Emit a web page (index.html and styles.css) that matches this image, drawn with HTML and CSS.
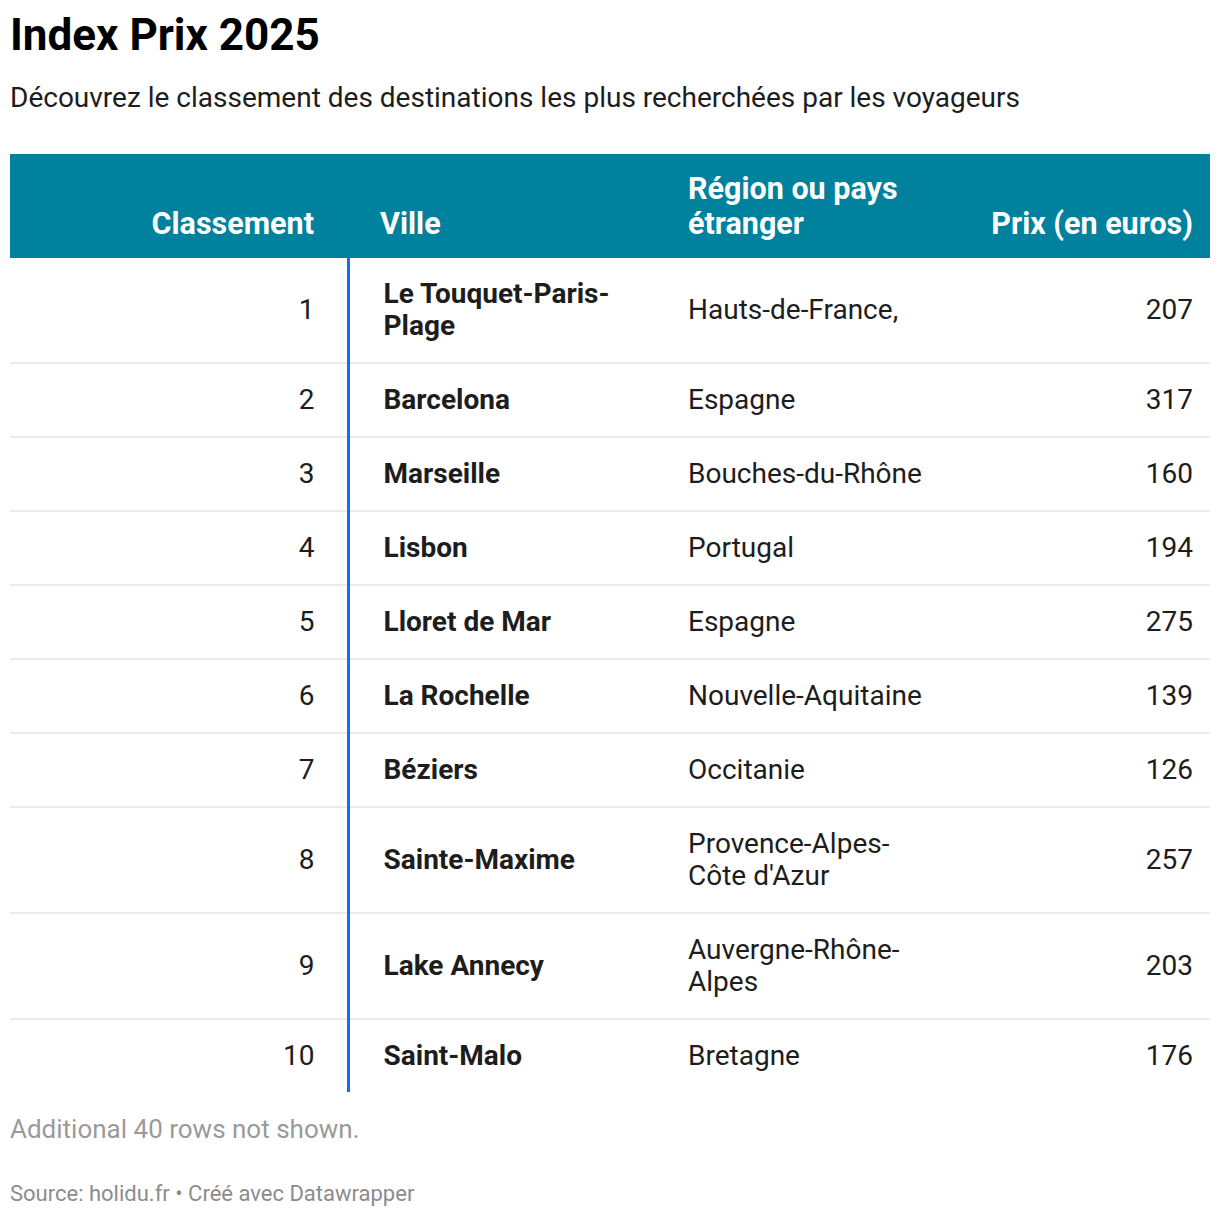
FILE: index.html
```html
<!DOCTYPE html>
<html lang="fr">
<head>
<meta charset="utf-8">
<title>Index Prix 2025</title>
<link rel="stylesheet" href="styles.css">
</head>
<body>
<div class="chart">
  <h1 class="title">Index Prix 2025</h1>
  <p class="subtitle">Découvrez le classement des destinations les plus recherchées par les voyageurs</p>
  <table class="table">
    <colgroup>
      <col class="c-rank">
      <col class="c-city">
      <col class="c-region">
      <col class="c-price">
    </colgroup>
    <thead>
      <tr>
        <th class="rank">Classement</th>
        <th class="city">Ville</th>
        <th class="region">Région ou pays étranger</th>
        <th class="price">Prix (en euros)</th>
      </tr>
    </thead>
    <tbody>
      <tr><td class="rank">1</td><td class="city">Le Touquet-Paris-Plage</td><td class="region">Hauts-de-France,</td><td class="price">207</td></tr>
      <tr><td class="rank">2</td><td class="city">Barcelona</td><td class="region">Espagne</td><td class="price">317</td></tr>
      <tr><td class="rank">3</td><td class="city">Marseille</td><td class="region">Bouches-du-Rhône</td><td class="price">160</td></tr>
      <tr><td class="rank">4</td><td class="city">Lisbon</td><td class="region">Portugal</td><td class="price">194</td></tr>
      <tr><td class="rank">5</td><td class="city">Lloret de Mar</td><td class="region">Espagne</td><td class="price">275</td></tr>
      <tr><td class="rank">6</td><td class="city">La Rochelle</td><td class="region">Nouvelle-Aquitaine</td><td class="price">139</td></tr>
      <tr><td class="rank">7</td><td class="city">Béziers</td><td class="region">Occitanie</td><td class="price">126</td></tr>
      <tr><td class="rank">8</td><td class="city">Sainte-Maxime</td><td class="region">Provence-Alpes-Côte d'Azur</td><td class="price">257</td></tr>
      <tr><td class="rank">9</td><td class="city">Lake Annecy</td><td class="region">Auvergne-Rhône-Alpes</td><td class="price">203</td></tr>
      <tr><td class="rank">10</td><td class="city">Saint-Malo</td><td class="region">Bretagne</td><td class="price">176</td></tr>
    </tbody>
  </table>
  <p class="note">Additional 40 rows not shown.</p>
  <p class="source">Source: holidu.fr • Créé avec Datawrapper</p>
</div>
</body>
</html>
```

FILE: styles.css
```css
html, body {
  margin: 0;
  padding: 0;
  background: #ffffff;
}

body {
  font-family: Roboto, "Liberation Sans", sans-serif;
  color: #1d1d1d;
}

.chart {
  padding: 8px 10px 0 10px;
}

.title {
  margin: 0;
  font-size: 44px;
  font-weight: 700;
  line-height: 54px;
  color: #000000;
}

.subtitle {
  margin: 19px 0 0 0;
  font-size: 28px;
  line-height: 34px;
  color: #1d1d1d;
}

.table {
  margin-top: 39px;
  width: 1200px;
  border-collapse: collapse;
  table-layout: fixed;
}

.c-rank { width: 338px; }
.c-city { width: 308px; }
.c-region { width: 304px; }
.c-price { width: 250px; }

.table th {
  background: #00819d;
  color: #ffffff;
  font-size: 30.5px;
  font-weight: 700;
  line-height: 35px;
  vertical-align: bottom;
  text-align: left;
  padding: 17px 0 17px 0;
}

.table td {
  font-size: 28px;
  line-height: 32px;
  padding: 20px 0;
  vertical-align: middle;
  border-bottom: 2px solid #ebebeb;
}

.table tbody tr:last-child td {
  border-bottom: none;
}

.table th.rank {
  text-align: right;
  padding-right: 34px;
}

.table td.rank {
  text-align: right;
  padding-right: 32px;
}

.table th.city {
  padding-left: 32px;
}

.table td.city {
  font-weight: 700;
  border-left: 3px solid #166cf2;
  padding-left: 34px;
  padding-right: 10px;
}

.table .region {
  padding-left: 32px;
  padding-right: 27px;
}

.table .price {
  text-align: right;
  padding-right: 17px;
}

.note {
  margin: 21px 0 0 0;
  font-size: 26px;
  line-height: 32px;
  color: #9a9a9a;
}

.source {
  margin: 35px 0 0 0;
  font-size: 22px;
  line-height: 28px;
  color: #8c8c8c;
}
```
